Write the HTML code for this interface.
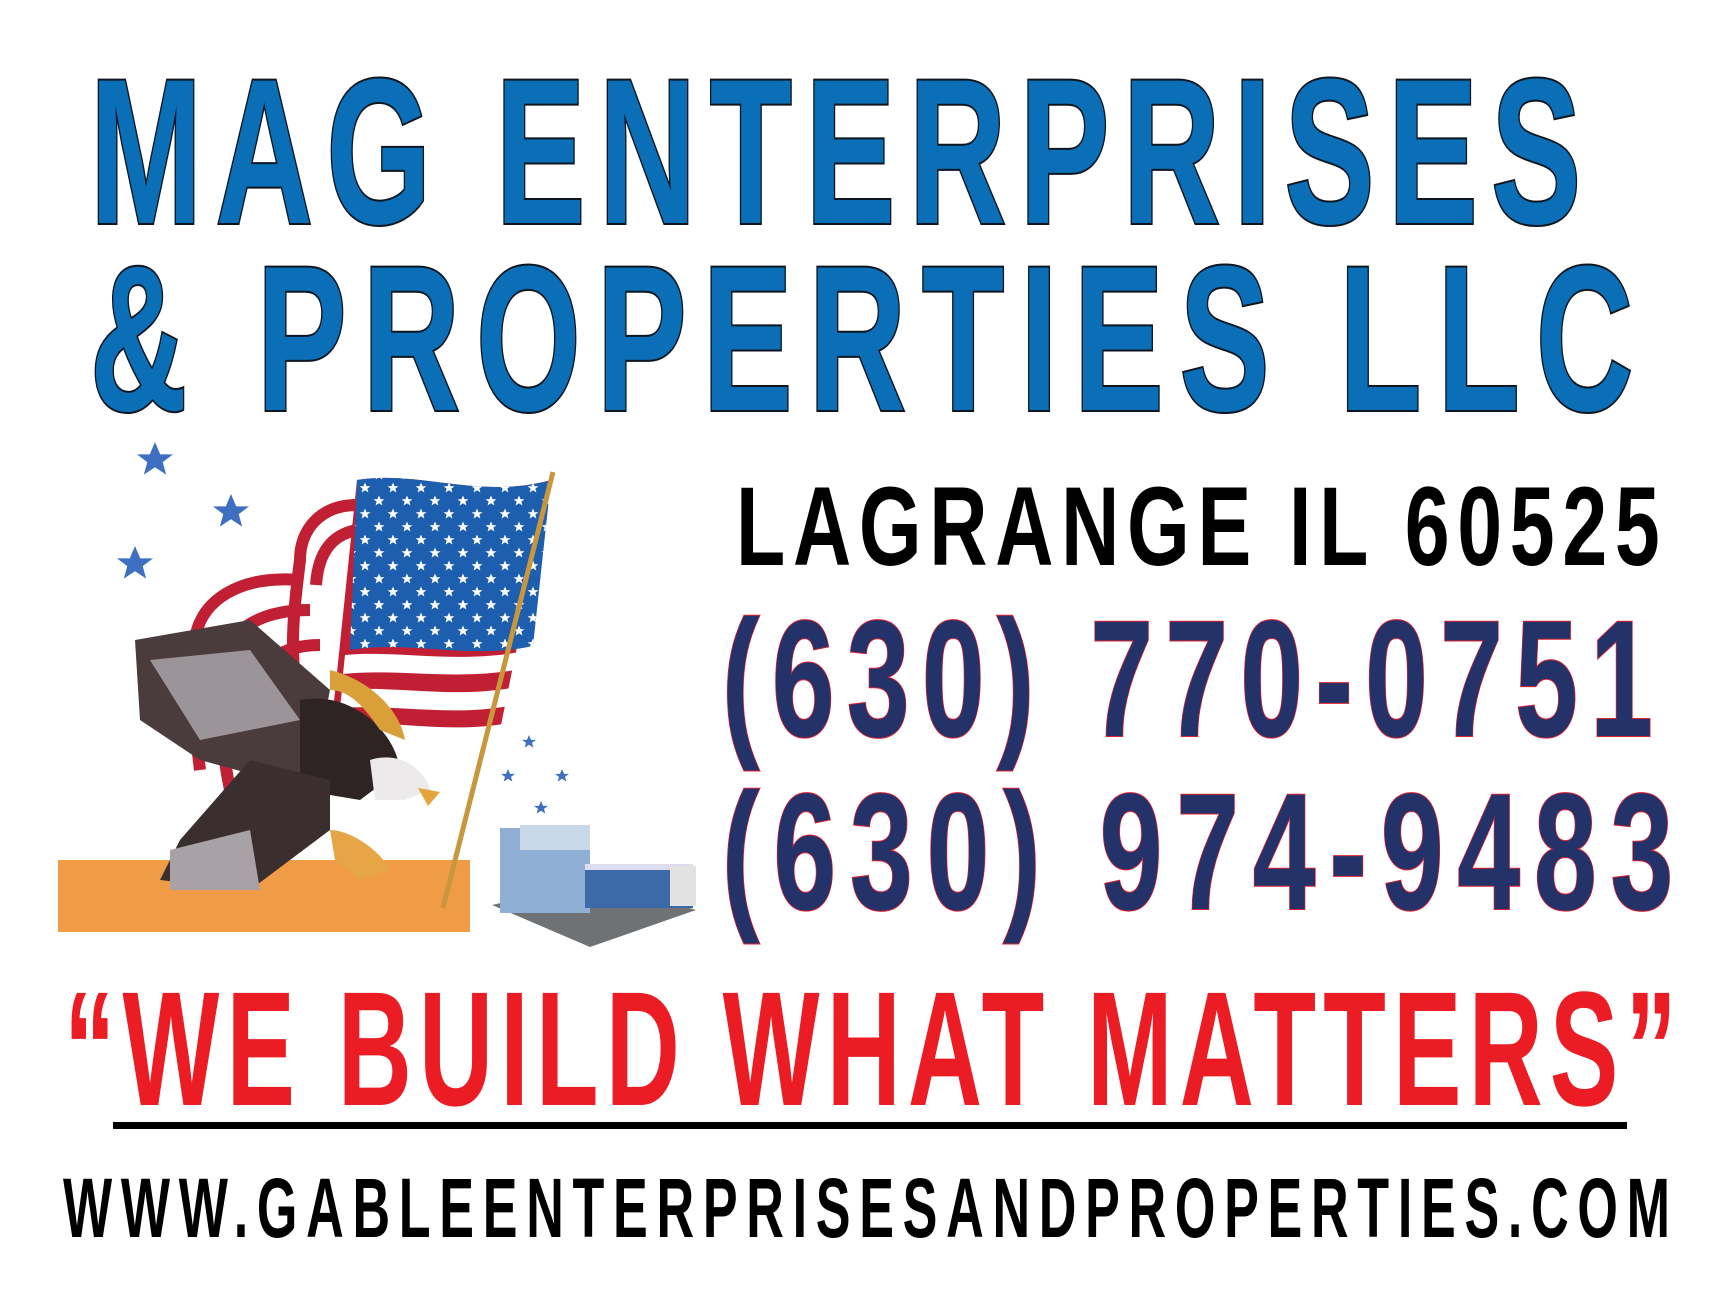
<!DOCTYPE html>
<html><head><meta charset="utf-8"><style>
html,body{margin:0;padding:0;background:#fff;width:1728px;height:1296px;overflow:hidden}
svg{display:block}
text{font-family:"Liberation Sans Narrow","Liberation Sans",sans-serif;font-weight:bold}
</style></head><body>
<svg width="1728" height="1296" viewBox="0 0 1728 1296" xmlns="http://www.w3.org/2000/svg">
<defs>
<path id="st" d="M0,-10 L2.9,-3.1 10,-3.1 4.3,1.2 6.2,8.1 0,4 -6.2,8.1 -4.3,1.2 -10,-3.1 -2.9,-3.1Z"/>
<pattern id="stars" x="357" y="480" width="28" height="26" patternUnits="userSpaceOnUse">
<use href="#st" transform="translate(8,8) scale(0.55)" fill="#fff"/>
<use href="#st" transform="translate(22,21) scale(0.55)" fill="#fff"/>
</pattern>
</defs>
<g stroke="#0d1620" stroke-width="4" paint-order="stroke" fill="#0a6fb7">
<text transform="translate(90,223) scale(0.65,1)" font-size="207" textLength="2294" lengthAdjust="spacing">MAG ENTERPRISES</text>
<text transform="translate(90,410) scale(0.65,1)" font-size="207" textLength="2374" lengthAdjust="spacing">&amp; PROPERTIES LLC</text>
</g>
<text transform="translate(736,565) scale(0.72,1)" font-size="112" textLength="1283" lengthAdjust="spacing" fill="#000">LAGRANGE IL 60525</text>
<g fill="#233268" stroke="#e02030" stroke-width="2" paint-order="stroke">
<text transform="translate(722,736) scale(0.68,1)" font-size="166" textLength="1369" lengthAdjust="spacing">(630) 770-0751</text>
<text transform="translate(722,909) scale(0.68,1)" font-size="166" textLength="1399" lengthAdjust="spacing">(630) 974-9483</text>
</g>
<text transform="translate(64,1105) scale(0.63,1)" font-size="163" textLength="2560" lengthAdjust="spacing" fill="#ec1c24">“WE BUILD WHAT MATTERS”</text>
<rect x="113" y="1122" width="1514" height="7" fill="#000"/>
<text transform="translate(63,1237) scale(0.62,1)" font-size="84" textLength="2592" lengthAdjust="spacing" fill="#000">WWW.GABLEENTERPRISESANDPROPERTIES.COM</text>

<g fill="#3f6fc0">
<use href="#st" transform="translate(155,460) scale(1.8)"/>
<use href="#st" transform="translate(231,512) scale(1.8)"/>
<use href="#st" transform="translate(135,564) scale(1.8)"/>
<use href="#st" transform="translate(529,742) scale(0.7)"/>
<use href="#st" transform="translate(508,776) scale(0.7)"/>
<use href="#st" transform="translate(562,776) scale(0.7)"/>
<use href="#st" transform="translate(541,808) scale(0.7)"/>
</g>
<rect x="58" y="860" width="412" height="72" fill="#f09b45"/>
<g fill="none" stroke="#c11f33" stroke-width="12">
<path d="M357,505 C320,505 300,530 300,560 C295,600 290,640 295,680"/>
<path d="M357,530 C330,535 318,555 316,585"/>
<path d="M300,580 C240,575 200,600 195,640 C190,690 195,730 200,770"/>
<path d="M310,610 C260,610 225,630 222,670 C218,710 222,750 230,790"/>
<path d="M320,645 C275,645 250,670 248,710 C246,750 255,790 262,830"/>
</g>
<path d="M357,480 C420,470 480,500 551,480 L500,730 C440,740 380,720 330,740 Z" fill="#c11f33"/>
<g fill="#fff">
<path d="M345,655 C400,650 460,665 530,650 L526,668 C460,682 400,668 343,674Z"/>
<path d="M342,690 C400,685 455,700 522,686 L518,704 C455,718 400,704 340,708Z"/>
<path d="M338,724 C400,720 450,735 514,722 L510,738 C450,752 400,740 336,742Z"/>
</g>
<path d="M357,480 C420,470 480,500 551,480 L533,646 C470,660 410,640 350,650 Z" fill="#1d5eae"/>
<path d="M357,480 C420,470 480,500 551,480 L533,646 C470,660 410,640 350,650 Z" fill="url(#stars)"/>
<line x1="553" y1="472" x2="443" y2="908" stroke="#c8963c" stroke-width="5"/>
<g>
<path d="M135,640 L250,620 L330,690 L310,790 L200,760 L140,720 Z" fill="#4a3c3c"/>
<path d="M150,660 L250,650 L300,720 L200,740 Z" fill="#9b9498"/>
<path d="M300,700 C350,690 395,730 400,770 L360,800 L300,790 Z" fill="#2f2424"/>
<path d="M330,670 C370,680 400,710 405,740 L380,730 C360,700 345,690 330,690Z" fill="#d9a03a"/>
<path d="M370,760 C400,750 425,770 430,790 L405,800 L375,800 Z" fill="#eceaea"/>
<path d="M418,788 L440,792 L428,806 Z" fill="#e4a43a"/>
<path d="M250,760 L330,780 L330,830 L250,890 L160,880 L180,840 Z" fill="#3a2e2e"/>
<path d="M170,850 L250,830 L260,890 L170,890 Z" fill="#a8a2a6"/>
<path d="M330,830 C350,830 380,850 390,870 L360,880 L335,860Z" fill="#e7a646"/>
</g>
<g>
<path d="M492,905 L590,947 L696,910 L600,880 Z" fill="#6f7274"/>
<rect x="500" y="828" width="90" height="85" fill="#8fb0d4"/>
<rect x="520" y="825" width="70" height="25" fill="#c9d8e8"/>
<rect x="585" y="868" width="108" height="40" fill="#3c6aa8"/>
<rect x="585" y="864" width="108" height="6" fill="#dde"/>
<rect x="670" y="866" width="26" height="40" fill="#e2e2e2"/>
</g>
</svg>
</body></html>
